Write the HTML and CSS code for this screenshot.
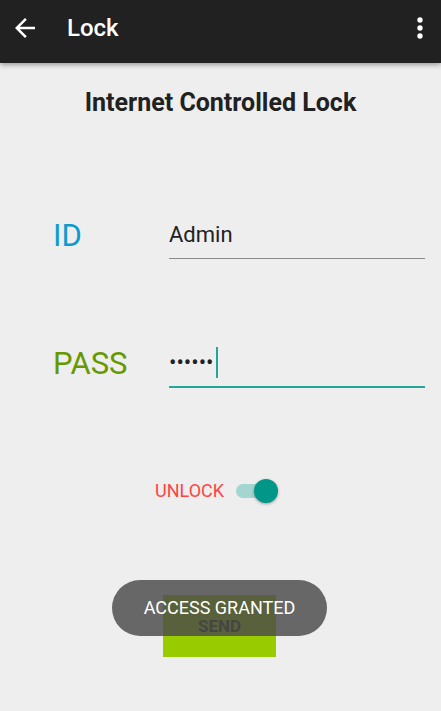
FILE: index.html
```html
<!DOCTYPE html>
<html lang="en">
<head>
<meta charset="utf-8">
<title>Lock</title>
<link rel="stylesheet" href="styles.css">
</head>
<body>
<div class="screen">
  <header class="appbar">
    <svg class="icon-back" viewBox="0 0 24 24" width="30" height="30"><path fill="#fff" d="M20 11H7.83l5.59-5.59L12 4l-8 8 8 8 1.41-1.41L7.83 13H20v-2z"/></svg>
    <span class="appbar-title">Lock</span>
    <svg class="icon-more" viewBox="0 0 24 24" width="32" height="32"><circle cx="12" cy="6" r="2" fill="#fff"/><circle cx="12" cy="12" r="2" fill="#fff"/><circle cx="12" cy="18" r="2" fill="#fff"/></svg>
  </header>
  <main class="content">
    <h1 class="heading">Internet Controlled Lock</h1>
    <div class="field field-id">
      <label class="field-label label-id">ID</label>
      <div class="field-input input-id">Admin</div>
    </div>
    <div class="field field-pass">
      <label class="field-label label-pass">PASS</label>
      <div class="field-input input-pass"><span class="dots">••••••</span><span class="cursor"></span></div>
    </div>
    <div class="switch-row">
      <span class="switch-label">UNLOCK</span>
      <span class="switch"><span class="switch-track"></span><span class="switch-thumb"></span></span>
    </div>
    <div class="btn-row">
      <button class="btn-send">SEND</button>
    </div>
  </main>
  <div class="toast">ACCESS GRANTED</div>
</div>
</body>
</html>
```
FILE: styles.css
```css
html, body {
  margin: 0;
  padding: 0;
  background: #eeeeee;
}
body {
  font-family: Roboto, "Noto Sans", sans-serif;
  width: 441px;
  height: 711px;
  overflow: hidden;
}
.screen {
  position: relative;
  width: 441px;
  height: 711px;
  background: #eeeeee;
}
.appbar {
  position: relative;
  height: 56px;
  padding-bottom: 7px;
  background: #212121;
  display: flex;
  align-items: center;
  box-shadow: 0 2px 5px rgba(0,0,0,0.35);
  z-index: 2;
}
.icon-back {
  display: block;
  margin-left: 10px;
}
.appbar-title {
  margin-left: 27px;
  color: #fff;
  font-size: 24px;
  font-weight: 500;
  line-height: 30px;
  flex: 1;
}
.icon-more {
  display: block;
  margin-right: 5px;
}
.content {
  display: flex;
  flex-direction: column;
}
.heading {
  margin: 25px 0 0;
  text-align: center;
  font-size: 25px;
  font-weight: 700;
  line-height: 30px;
  color: #212121;
}
.field {
  display: grid;
  grid-template-columns: 116px 256px;
  padding-left: 53px;
  align-items: center;
}
.field-id { margin-top: 102px; }
.field-pass { margin-top: 88px; }
.field-label {
  font-size: 31px;
  line-height: 30px;
  padding-bottom: 8px;
}
.label-id { color: #0e9ad0; }
.label-pass { color: #669900; }
.field-input {
  font-size: 22px;
  line-height: 30px;
  color: #212121;
  padding-bottom: 8px;
  display: flex;
  align-items: center;
}
.input-id {
  border-bottom: 1px solid #8a8a8a;
}
.input-pass {
  border-bottom: 2px solid #26a69a;
}
.dots {
  font-size: 22px;
  color: #212121;
}
.cursor {
  display: inline-block;
  width: 2px;
  height: 31px;
  background: #26a69a;
  margin-left: 2px;
}
.switch-row {
  display: flex;
  align-items: center;
  padding-left: 155px;
  margin-top: 89px;
  height: 28px;
}
.switch-label {
  color: #ff4444;
  font-size: 18px;
  line-height: 24px;
}
.switch {
  position: relative;
  display: inline-block;
  width: 44px;
  height: 28px;
  margin-left: 10px;
}
.switch-track {
  position: absolute;
  left: 2px;
  top: 7px;
  width: 36px;
  height: 14px;
  border-radius: 7px;
  background: #a3d6d0;
}
.switch-thumb {
  position: absolute;
  left: 20px;
  top: 2px;
  width: 24px;
  height: 24px;
  border-radius: 50%;
  background: #009688;
  box-shadow: 0 1px 3px rgba(0,0,0,0.35);
}
.btn-row {
  display: flex;
  padding-left: 163px;
  margin-top: 90px;
}
.btn-send {
  width: 113px;
  height: 62px;
  border: none;
  border-radius: 0;
  background: #99cc00;
  color: #333333;
  font-family: Roboto, "Noto Sans", sans-serif;
  font-size: 17px;
  font-weight: 700;
  padding: 0;
}
.toast {
  position: absolute;
  left: 112px;
  top: 580px;
  width: 215px;
  height: 56px;
  border-radius: 28px;
  background: rgba(73,73,73,0.82);
  color: #ffffff;
  font-size: 18px;
  line-height: 56px;
  text-align: center;
  z-index: 3;
}
```
